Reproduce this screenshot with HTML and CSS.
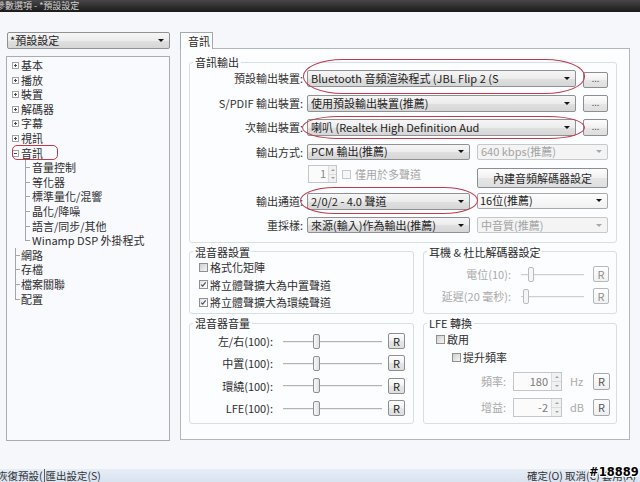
FILE: index.html
```html
<!DOCTYPE html>
<html>
<head>
<meta charset="utf-8">
<title>參數選項</title>
<link rel="stylesheet" href="styles.css">
</head>
<body>
<div class="titlebar">參數選項 - *預設設定</div>
<div class="main">
  <div class="leftcol">
    <div class="combo combo-preset"><span class="ctext">*預設設定</span><span class="arrow"></span></div>
    <div class="tree">
      <div class="ti root"><span class="exp plus"></span>基本</div>
      <div class="ti root"><span class="exp plus"></span>播放</div>
      <div class="ti root"><span class="exp plus"></span>裝置</div>
      <div class="ti root"><span class="exp plus"></span>解碼器</div>
      <div class="ti root"><span class="exp plus"></span>字幕</div>
      <div class="ti root"><span class="exp plus"></span>視訊</div>
      <div class="ti root open"><span class="exp minus"></span>音訊</div>
      <div class="ti child">音量控制</div>
      <div class="ti child">等化器</div>
      <div class="ti child">標準量化/混響</div>
      <div class="ti child">晶化/降噪</div>
      <div class="ti child">語言/同步/其他</div>
      <div class="ti child last">Winamp DSP 外掛程式</div>
      <div class="ti leaf">網路</div>
      <div class="ti leaf">存檔</div>
      <div class="ti leaf">檔案關聯</div>
      <div class="ti leaf last">配置</div>
    </div>
  </div>
  <div class="rightcol">
    <div class="tabs"><div class="tab">音訊</div></div>
    <div class="panel">
      <fieldset class="grp grp-out">
        <legend>音訊輸出</legend>
        <div class="orow">
          <div class="olabel">預設輸出裝置:</div>
          <div class="combo cb-wide"><span class="ctext">Bluetooth 音頻渲染程式 (JBL Flip 2 (S</span><span class="arrow"></span></div>
          <div class="btn btn-dots dots-1">...</div>
        </div>
        <div class="orow">
          <div class="olabel">S/PDIF 輸出裝置:</div>
          <div class="combo cb-wide"><span class="ctext">使用預設輸出裝置(推薦)</span><span class="arrow"></span></div>
          <div class="btn btn-dots">...</div>
        </div>
        <div class="orow">
          <div class="olabel">次輸出裝置:</div>
          <div class="combo cb-wide"><span class="ctext">喇叭 (Realtek High Definition Aud</span><span class="arrow"></span></div>
          <div class="btn btn-dots">...</div>
        </div>
        <div class="orow">
          <div class="olabel">輸出方式:</div>
          <div class="combo cb-mid cb-short"><span class="ctext">PCM 輸出(推薦)</span><span class="arrow"></span></div>
          <div class="combo cb-right cb-short disabled"><span class="ctext">640 kbps(推薦)</span><span class="arrow"></span></div>
        </div>
        <div class="orow">
          <div class="olabel"></div>
          <div class="spin spin-small disabled"><span class="spin-val">1</span><span class="spin-btns"><span class="sb up"></span><span class="sb down"></span></span></div>
          <div class="check check-multi disabled"><span class="cb"></span>僅用於多聲道</div>
          <div class="btn btn-codec">內建音頻解碼器設定</div>
        </div>
        <div class="orow">
          <div class="olabel">輸出通道:</div>
          <div class="combo cb-mid"><span class="ctext">2/0/2 - 4.0 聲道</span><span class="arrow"></span></div>
          <div class="combo cb-right cb-white"><span class="ctext">16位(推薦)</span><span class="arrow"></span></div>
        </div>
        <div class="orow">
          <div class="olabel">重採樣:</div>
          <div class="combo cb-mid cb-short"><span class="ctext">來源(輸入)作為輸出(推薦)</span><span class="arrow"></span></div>
          <div class="combo cb-right cb-short disabled"><span class="ctext">中音質(推薦)</span><span class="arrow"></span></div>
        </div>
      </fieldset>

      <div class="grow grow-2">
        <fieldset class="grp grp-left">
          <legend>混音器設置</legend>
          <div class="mix-set">
            <div class="check"><span class="cb"></span>格式化矩陣</div>
            <div class="check"><span class="cb checked"><svg viewBox="0 0 9 9" width="7" height="7"><path d="M1.5 4.6 L3.5 6.6 L7.3 1.8" fill="none" stroke="#3c4e6e" stroke-width="1.4"/></svg></span>將立體聲擴大為中置聲道</div>
            <div class="check"><span class="cb checked"><svg viewBox="0 0 9 9" width="7" height="7"><path d="M1.5 4.6 L3.5 6.6 L7.3 1.8" fill="none" stroke="#3c4e6e" stroke-width="1.4"/></svg></span>將立體聲擴大為環繞聲道</div>
          </div>
        </fieldset>
        <fieldset class="grp grp-right">
          <legend>耳機 &amp; 杜比解碼器設定</legend>
          <div class="hp">
            <div class="srow">
              <div class="slabel hp-label disabled-text">電位(10):</div>
              <div class="slider hp-slider disabled"><span class="thumb t-hp1"></span></div>
              <div class="btn btn-r disabled">R</div>
            </div>
            <div class="srow">
              <div class="slabel hp-label disabled-text">延遲(20 毫秒):</div>
              <div class="slider hp-slider disabled"><span class="thumb t-hp2"></span></div>
              <div class="btn btn-r disabled">R</div>
            </div>
          </div>
        </fieldset>
      </div>

      <div class="grow grow-3">
        <fieldset class="grp grp-left">
          <legend>混音器音量</legend>
          <div class="vol">
            <div class="srow vrow">
              <div class="slabel vol-label">左/右(100):</div>
              <div class="slider vol-slider"><span class="thumb t-vol"></span></div>
              <div class="btn btn-r">R</div>
            </div>
            <div class="srow vrow">
              <div class="slabel vol-label">中置(100):</div>
              <div class="slider vol-slider"><span class="thumb t-vol"></span></div>
              <div class="btn btn-r">R</div>
            </div>
            <div class="srow vrow">
              <div class="slabel vol-label">環繞(100):</div>
              <div class="slider vol-slider"><span class="thumb t-vol"></span></div>
              <div class="btn btn-r">R</div>
            </div>
            <div class="srow vrow">
              <div class="slabel vol-label">LFE(100):</div>
              <div class="slider vol-slider"><span class="thumb t-vol"></span></div>
              <div class="btn btn-r">R</div>
            </div>
          </div>
        </fieldset>
        <fieldset class="grp grp-right">
          <legend>LFE 轉換</legend>
          <div class="lfe">
            <div class="check lfe-en"><span class="cb"></span>啟用</div>
            <div class="check lfe-boost"><span class="cb"></span>提升頻率</div>
            <div class="lrow lrow-first">
              <div class="slabel lfe-label disabled-text">頻率:</div>
              <div class="spin spin-lfe disabled"><span class="spin-val">180</span><span class="spin-btns"><span class="sb up"></span><span class="sb down"></span></span></div>
              <div class="unit disabled-text">Hz</div>
              <div class="btn btn-r btn-r2">R</div>
            </div>
            <div class="lrow">
              <div class="slabel lfe-label disabled-text">增益:</div>
              <div class="spin spin-lfe disabled"><span class="spin-val">-2</span><span class="spin-btns"><span class="sb up"></span><span class="sb down"></span></span></div>
              <div class="unit disabled-text">dB</div>
              <div class="btn btn-r btn-r2">R</div>
            </div>
          </div>
        </fieldset>
      </div>
    </div>
  </div>
</div>
<div class="bottombar">
  <div class="bb-left"><span class="bb-b1">恢復預設(</span><span class="bb-b2">匯出設定(S)</span></div>
  <div class="bb-right"><span>確定(O)</span><span>取消(C)</span><span>套用(A)</span></div>
</div>

<div class="mark mark-tree"></div>
<div class="mark mark-e1"></div>
<div class="mark mark-e2"></div>
<div class="mark mark-e3"></div>
<div class="watermark">#18889</div>
</body>
</html>
```

FILE: styles.css
```css
* { box-sizing: border-box; }

body {
  margin: 0;
  width: 640px;
  height: 482px;
  overflow: hidden;
  position: relative;
  display: flex;
  flex-direction: column;
  background: #f5f7fb;
  color: #2e2e2e;
  font-family: "Noto Sans CJK TC", "Noto Sans", sans-serif;
  font-size: 11px;
}

.titlebar {
  flex: none;
  height: 12px;
  background: linear-gradient(#474747, #1b1b1b);
  color: #d2d2d2;
  font-size: 9px;
  line-height: 11px;
  text-indent: -4px;
  white-space: nowrap;
  overflow: hidden;
}

.main {
  flex: none;
  display: flex;
  gap: 10px;
  height: 429px;
  padding: 20px 0 0 6px;
}

.leftcol {
  width: 164px;
  display: flex;
  flex-direction: column;
}

.rightcol {
  width: 450px;
  display: flex;
  flex-direction: column;
}

/* combos */
.combo {
  display: flex;
  align-items: center;
  height: 17px;
  padding-left: 3px;
  border: 1px solid #8f9194;
  border-radius: 2px;
  background: linear-gradient(#f6f6f6 0%, #ececec 50%, #e0e0e0 51%, #d6d6d6 100%);
  color: #222;
  line-height: 15px;
  white-space: nowrap;
  flex: none;
}
.ctext {
  flex: 1 1 auto;
  min-width: 0;
  overflow: hidden;
}
.arrow {
  flex: none;
  width: 0;
  height: 0;
  margin: 0 5px 0 3px;
  border-left: 3px solid transparent;
  border-right: 3px solid transparent;
  border-top: 3px solid #141414;
}
.combo.disabled {
  border-color: #c6c9cc;
  background: #f4f4f4;
  color: #a3a3a3;
}
.combo.disabled .arrow { border-top-color: #a8a8a8; }
.combo.cb-white {
  background: linear-gradient(#fdfdfd, #f1f1f1);
  border-color: #a7a9ac;
  padding-left: 2px;
}

.combo-preset {
  margin-left: 1px;
  width: 163px;
  height: 17px;
  padding-left: 2px;
}

/* tree */
.tree {
  margin-top: 7px;
  height: 385px;
  border: 1px solid #a9acb1;
  background: #f9fafd;
  padding-top: 1px;
}
.ti {
  position: relative;
  height: 14.6px;
  line-height: 14.6px;
  padding-left: 14px;
  white-space: nowrap;
}
.ti.child { padding-left: 25px; }
.exp {
  position: absolute;
  left: 5px;
  top: 4px;
  width: 7px;
  height: 7px;
  border: 1px solid #a3a3a3;
  background: #fff;
}
.exp::before {
  content: "";
  position: absolute;
  left: 1px;
  top: 2px;
  width: 3px;
  height: 1px;
  background: #4a4a4a;
}
.exp.plus::after {
  content: "";
  position: absolute;
  left: 2px;
  top: 1px;
  width: 1px;
  height: 3px;
  background: #4a4a4a;
}
.ti.child::before {
  content: "";
  position: absolute;
  left: 18px;
  top: 0;
  width: 1px;
  height: 100%;
  background: #a5a5a5;
}
.ti.child.last::before { height: 50%; }
.ti.child::after {
  content: "";
  position: absolute;
  left: 18px;
  top: 7px;
  width: 5px;
  height: 1px;
  background: #a5a5a5;
}
.ti.leaf::before {
  content: "";
  position: absolute;
  left: 8px;
  top: 0;
  width: 1px;
  height: 100%;
  background: #a5a5a5;
}
.ti.leaf.last::before { height: 50%; }
.ti.leaf::after {
  content: "";
  position: absolute;
  left: 8px;
  top: 7px;
  width: 5px;
  height: 1px;
  background: #a5a5a5;
}

/* tabs */
.tabs {
  height: 17px;
  display: flex;
}
.tab {
  position: relative;
  z-index: 1;
  width: 33px;
  height: 17px;
  border: 1px solid #a2a8b0;
  border-bottom: none;
  background: #fdfdfe;
  padding-left: 7px;
  line-height: 17px;
  color: #2a2a2a;
}
.panel {
  margin-top: -1px;
  height: 392px;
  border: 1px solid #b1b6bd;
  background: #fcfdfe;
  padding: 6px 12px 0 8px;
}

/* group boxes */
.grp {
  margin: 0;
  padding: 0;
  min-width: 0;
  border: 1px solid #d5dfe5;
  border-radius: 3px;
}
.grp > legend {
  margin-left: 3px;
  padding: 0 2px;
  line-height: 14px;
  font-size: 11px;
  color: #2a2a2a;
}
.grp-out {
  padding: 0 8px 1px 0;
}
.orow {
  display: flex;
  align-items: flex-start;
  height: 24.5px;
  padding-top: 1px;
}
.olabel {
  flex: none;
  width: 113px;
  margin-right: 4px;
  text-align: right;
  line-height: 17px;
  white-space: nowrap;
  color: #333;
}
.cb-wide { width: 269px; }
.cb-mid { width: 163px; }
.cb-right { width: 131px; margin-left: 7px; height: 16px; }
.cb-short { height: 16px; }

/* buttons */
.btn {
  flex: none;
  display: flex;
  align-items: center;
  justify-content: center;
  border: 1px solid #8c8e91;
  border-radius: 2px;
  background: linear-gradient(#fdfdfd 0%, #f1f1f1 50%, #e6e6e6 51%, #dedede 100%);
  color: #222;
  line-height: 14px;
  white-space: nowrap;
}
.btn-dots {
  width: 25px;
  height: 17px;
  margin-left: 7px;
  font-size: 9px;
  align-items: flex-end;
  padding-bottom: 1px;
  color: #555;
}
.dots-1 { margin-top: 2px; height: 16px; }
.btn-codec {
  margin-left: auto;
  width: 131px;
  height: 20px;
  color: #2a2a2a;
}

/* spinners */
.spin {
  flex: none;
  display: flex;
  border: 1px solid #c3c6ca;
  background: #fbfbfb;
  color: #8a8a8a;
}
.spin-val {
  flex: 1;
  text-align: right;
  padding-right: 2px;
  line-height: 15px;
}
.spin-btns {
  width: 8px;
  display: flex;
  flex-direction: column;
  border-left: 1px solid #dcdcdc;
}
.sb {
  flex: 1;
  display: flex;
  align-items: center;
  justify-content: center;
  background: #f1f1f1;
}
.sb + .sb { border-top: 1px solid #dcdcdc; }
.sb::before {
  content: "";
  width: 0;
  height: 0;
  border-left: 2px solid transparent;
  border-right: 2px solid transparent;
}
.sb.up::before { border-bottom: 2px solid #a0a0a0; }
.sb.down::before { border-top: 2px solid #a0a0a0; }
.spin-small {
  width: 29px;
  height: 18px;
  margin-left: 1px;
  margin-top: -3px;
}
.spin-lfe {
  width: 49px;
  height: 19px;
  margin-left: 7px;
  color: #7a7a7a;
}
.spin-lfe .spin-btns { width: 10px; }
.spin-lfe .spin-val { line-height: 17px; padding-right: 3px; }

/* checkboxes */
.check {
  display: flex;
  align-items: center;
  white-space: nowrap;
  color: #2e2e2e;
}
.cb {
  flex: none;
  display: flex;
  align-items: center;
  justify-content: center;
  width: 9px;
  height: 9px;
  margin-right: 2px;
  border: 1px solid #8e8f8f;
  background: linear-gradient(135deg, #cfcfcf, #f5f5f5);
}
.cb.checked { background: linear-gradient(135deg, #e2e2e2, #ffffff); }
.check-multi {
  margin-left: 5px;
  margin-top: -3px;
  height: 18px;
  color: #a5a5a5;
}
.check-multi .cb { border-color: #c7c7c7; background: #f6f6f6; margin-right: 4px; }

.grow {
  display: flex;
  gap: 9px;
}
.grow-2 { margin-top: 2px; }
.grow-3 { margin-top: 2px; }
.grp-left { width: 225px; flex: none; }
.grp-right { width: 194px; flex: none; }

.mix-set { padding: 0 0 2px 9px; }
.mix-set .check { height: 17.5px; }

/* slider rows */
.srow {
  display: flex;
  align-items: center;
}
.slabel {
  flex: none;
  text-align: right;
  white-space: nowrap;
}
.disabled-text { color: #a9a9a9; }
.slider {
  flex: none;
  display: flex;
  align-items: center;
  height: 15px;
  background: linear-gradient(#b3b3b3, #b3b3b3) 0 7px / 100% 1px no-repeat,
              linear-gradient(#eeeeee, #eeeeee) 0 8px / 100% 1px no-repeat;
}
.slider.disabled {
  background: linear-gradient(#cfcfcf, #cfcfcf) 0 7px / 100% 1px no-repeat,
              linear-gradient(#f2f2f2, #f2f2f2) 0 8px / 100% 1px no-repeat;
}
.thumb {
  flex: none;
  width: 7px;
  height: 15px;
  border: 1px solid #8d8f92;
  border-radius: 2px;
  background: linear-gradient(90deg, #f7f7f7, #e1e1e1);
}
.slider.disabled .thumb { border-color: #b9bbbe; background: #f6f6f6; }
.btn-r {
  width: 17px;
  height: 16px;
  font-size: 11px;
}
.btn-r.disabled {
  border-color: #b5b8bc;
  background: linear-gradient(#ffffff, #f0f0f0);
  color: #8d8d8d;
}

.hp { padding: 4.5px 0 6px 1px; }
.hp .srow { height: 22px; }
.hp-label { width: 86px; }
.hp-slider { width: 63px; margin-left: 10px; }
.hp .btn-r { margin-left: 9px; width: 16px; }
.t-hp1 { margin-left: 7px; width: 6px; }
.t-hp2 { margin-left: 2px; width: 6px; }

.vol { padding: 0 0 3.5px 0; }
.vrow { height: 22.3px; }
.vol-label { width: 83px; }
.vol-slider { width: 99px; margin-left: 10px; }
.vol .btn-r { margin-left: 6px; }
.t-vol { margin-left: 30px; }

.lfe { padding: 0 0 2px 0; }
.lfe .check { height: 18px; }
.lfe-en { padding-left: 12px; }
.lfe-en .cb, .lfe-boost .cb { margin-right: 2px; width: 9px; }
.lfe-boost { padding-left: 28px; }
.lrow {
  display: flex;
  align-items: center;
  height: 26px;
}
.lrow-first { margin-top: 2px; }
.lfe-label { width: 82px; }
.unit { width: 31px; padding-left: 8px; flex: none; }
.btn-r2 { width: 17px; height: 17px; }
.lfe .btn-r2 { background: linear-gradient(#ffffff, #eeeeee); border-color: #a6a9ad; color: #555; }

/* bottom bar */
.bottombar {
  flex: none;
  margin-top: auto;
  height: 13px;
  display: flex;
  background: linear-gradient(#e6edf6, #d8e3f0);
  font-size: 10.5px;
  line-height: 13px;
  color: #333;
  white-space: nowrap;
  overflow: hidden;
}
.bb-left { margin-left: -3px; display: flex; }
.bb-b2 { border-left: 1px solid #5a5a5a; padding-left: 1px; margin-left: 1px; }
.bb-right { margin-left: auto; display: flex; gap: 2px; width: 113px; }

/* red annotation marks */
.mark {
  position: absolute;
  border: 1.5px solid #c23a4a;
}
.mark-tree { left: 12px; top: 145px; width: 46px; height: 15px; border-radius: 5px; }
.mark-e1 { left: 303px; top: 59px; width: 282px; height: 35px; border-radius: 40px / 17px; }
.mark-e2 { left: 302px; top: 116px; width: 283px; height: 23px; border-radius: 36px / 11.5px; }
.mark-e3 { left: 300px; top: 187px; width: 178px; height: 27px; border-radius: 34px / 13.5px; }

.watermark {
  position: absolute;
  left: 589px;
  top: 465px;
  font-family: "DejaVu Sans", sans-serif;
  font-weight: bold;
  font-size: 11.5px;
  line-height: 14px;
  color: #000;
  text-shadow: 1px 0 #fff, -1px 0 #fff, 0 1px #fff, 0 -1px #fff,
               1px 1px #fff, -1px -1px #fff, 1px -1px #fff, -1px 1px #fff;
}
```
